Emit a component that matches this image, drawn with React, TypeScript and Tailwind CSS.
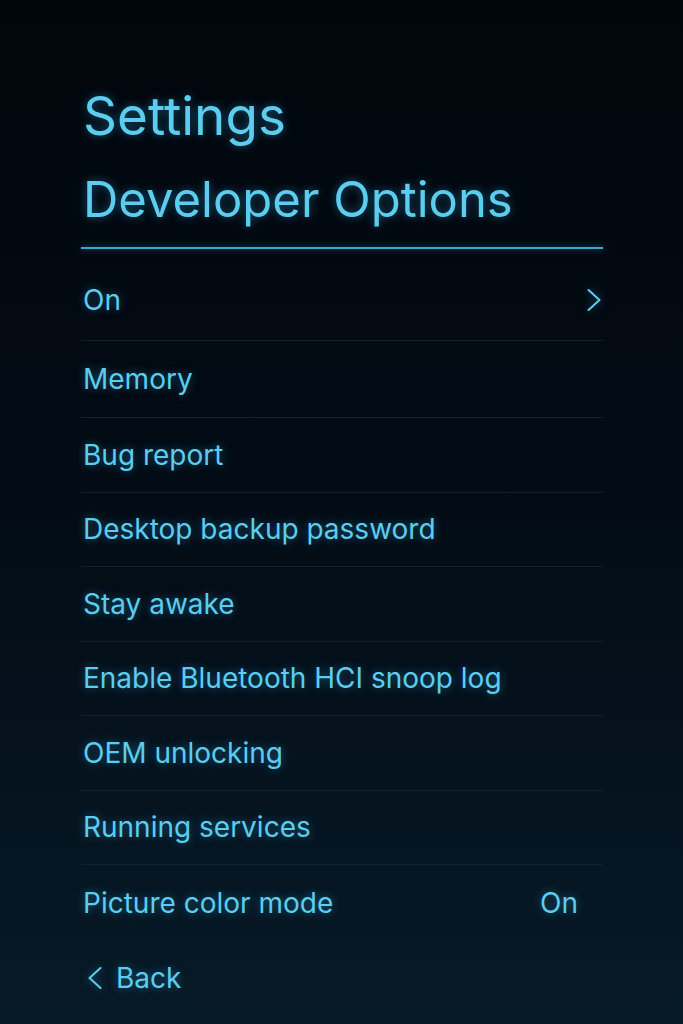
const items = [
  'Bug report',
  'Desktop backup password',
  'Stay awake',
  'Enable Bluetooth HCI snoop log',
  'OEM unlocking',
  'Running services',
];

export default function App() {
  return (
    <div className="min-h-[1024px] w-full bg-gradient-to-b from-[#01060c] via-[#030c15] to-[#071a27] font-['Inter','Liberation_Sans',sans-serif] text-[#5ccdee] [text-shadow:0_0_10px_rgba(56,189,248,0.45)]">
      <div className="ml-[81px] w-[522px] pt-[90px]">
        <h1 className="ml-[2px] text-[53px] leading-none">Settings</h1>
        <h2 className="mt-[32px] ml-[2px] text-[49px] leading-none">Developer Options</h2>
        <div className="mt-[23px] h-[2px] bg-[#3ba9cc] shadow-[0_0_6px_rgba(56,189,248,0.5)]" />

        {/* first row */}
        <div className="flex h-[92px] items-center justify-between border-b border-[#0e2230] pt-[10px] pl-[2px]">
          <span className="text-[28px] leading-none">On</span>
          <svg width="14" height="22" viewBox="0 0 14 22" className="mr-[2px] drop-shadow-[0_0_4px_rgba(56,189,248,0.5)]">
            <polyline points="1.5,1 12.5,11 1.5,21" fill="none" stroke="#5ccdee" strokeWidth="2" strokeLinecap="round" strokeLinejoin="round" />
          </svg>
        </div>

        <div className="flex h-[77px] items-center border-b border-[#0e2230] pl-[2px]">
          <span className="text-[28px] leading-none">Memory</span>
        </div>

        {items.map((item) => (
          <div
            key={item}
            className="flex h-[74.5px] items-center border-b border-[#0e2230] pl-[2px]"
          >
            <span className="text-[28px] leading-none">{item}</span>
          </div>
        ))}

        <div className="flex h-[75px] items-center justify-between pl-[2px]">
          <span className="text-[28px] leading-none">Picture color mode</span>
          <span className="mr-[25px] text-[28px] leading-none">On</span>
        </div>

        <div className="flex h-[75px] items-center gap-[14px] pl-[7px]">
          <svg width="14" height="22" viewBox="0 0 14 22" className="drop-shadow-[0_0_4px_rgba(56,189,248,0.5)]">
            <polyline points="12.5,1 1.5,11 12.5,21" fill="none" stroke="#5ccdee" strokeWidth="2" strokeLinecap="round" strokeLinejoin="round" />
          </svg>
          <span className="text-[28px] leading-none">Back</span>
        </div>
      </div>
    </div>
  );
}
